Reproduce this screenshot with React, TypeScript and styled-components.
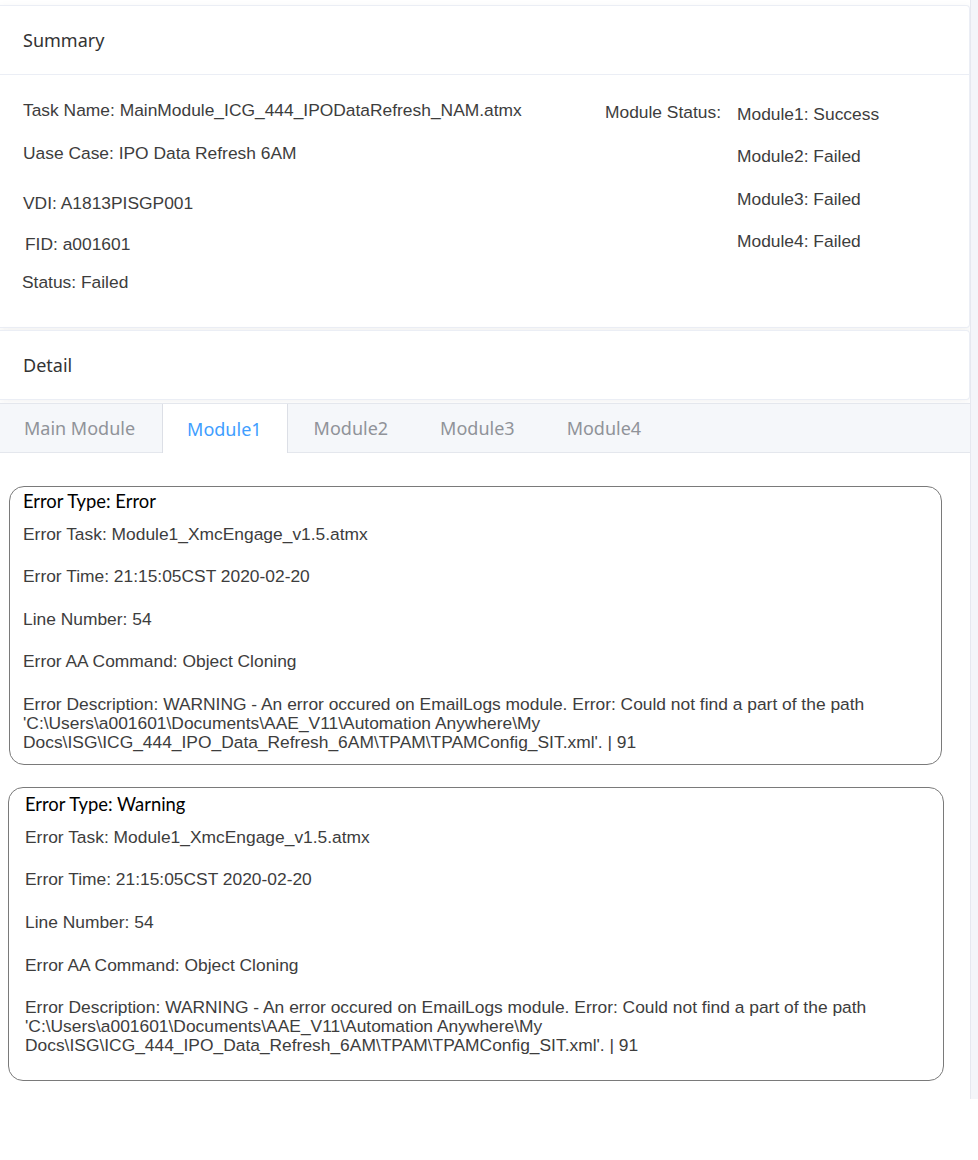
import React from 'react'
import styled, { createGlobalStyle } from 'styled-components'

const GlobalStyle = createGlobalStyle`
  body {
    margin: 0;
    background: #fff;
    font-family: "Liberation Sans", Arial, sans-serif;
    color: #3d3d3d;
  }
`

const summaryLeft = [
  { text: 'Task Name: MainModule_ICG_444_IPODataRefresh_NAM.atmx', top: 0, indent: 0 },
  { text: 'Uase Case: IPO Data Refresh 6AM', top: 23, indent: 0 },
  { text: 'VDI: A1813PISGP001', top: 30, indent: 0 },
  { text: 'FID: a001601', top: 21, indent: 2 },
  { text: 'Status: Failed', top: 18, indent: -1 },
]

const moduleStatus = ['Module1: Success', 'Module2: Failed', 'Module3: Failed', 'Module4: Failed']

const tabs = ['Main Module', 'Module1', 'Module2', 'Module3', 'Module4']

const errors = [
  { type: 'Error', inset: 9, width: 933, padX: 13, padTop: 3, padBottom: 12, top: 33, spacing: 23.4 },
  { type: 'Warning', inset: 8, width: 936, padX: 16, padTop: 5, padBottom: 25, top: 22, spacing: 23.7 },
]

const description =
  "Error Description: WARNING - An error occured on EmailLogs module. Error: Could not find a part of the path 'C:\\Users\\a001601\\Documents\\AAE_V11\\Automation Anywhere\\My Docs\\ISG\\ICG_444_IPO_Data_Refresh_6AM\\TPAM\\TPAMConfig_SIT.xml'. | 91"

export default function App() {
  return (
    <>
      <GlobalStyle />
      <Page>
        <Main>
          <Card>
            <CardHeader $divider>Summary</CardHeader>
            <SummaryBody>
              <LeftColumn>
                {summaryLeft.map((f) => (
                  <Field key={f.text} $top={f.top} $indent={f.indent}>
                    {f.text}
                  </Field>
                ))}
              </LeftColumn>
              <StatusBlock>
                <StatusLabel>Module Status:</StatusLabel>
                <StatusList>
                  {moduleStatus.map((m) => (
                    <StatusItem key={m}>{m}</StatusItem>
                  ))}
                </StatusList>
              </StatusBlock>
            </SummaryBody>
          </Card>

          <DetailCard>
            <CardHeader>Detail</CardHeader>
          </DetailCard>

          <TabBar>
            {tabs.map((t) => (
              <Tab key={t} $active={t === 'Module1'}>
                {t}
              </Tab>
            ))}
          </TabBar>

          <ErrorList>
            {errors.map((e) => (
              <ErrorCard
                key={e.type}
                $inset={e.inset}
                $width={e.width}
                $padX={e.padX}
                $padTop={e.padTop}
                $padBottom={e.padBottom}
                $top={e.top}
              >
                <ErrorTitle>Error Type: {e.type}</ErrorTitle>
                <ErrorLine $spacing={e.spacing}>Error Task: Module1_XmcEngage_v1.5.atmx</ErrorLine>
                <ErrorLine $spacing={e.spacing}>Error Time: 21:15:05CST 2020-02-20</ErrorLine>
                <ErrorLine $spacing={e.spacing}>Line Number: 54</ErrorLine>
                <ErrorLine $spacing={e.spacing}>Error AA Command: Object Cloning</ErrorLine>
                <ErrorLine $spacing={e.spacing}>{description}</ErrorLine>
              </ErrorCard>
            ))}
          </ErrorList>
        </Main>
        <Rail />
      </Page>
    </>
  )
}

const Page = styled.div`
  display: flex;
  align-items: stretch;
  width: 978px;
`

const Main = styled.main`
  width: 970px;
  padding: 5px 0 18px;
  flex-shrink: 0;
`

const Rail = styled.div`
  flex: 1;
  background: #f4f5f9;
  border-left: 1px solid #e6e8ef;
`

const Card = styled.section`
  background: #fff;
  border: 1px solid #ebeef5;
  border-left: none;
  border-radius: 0 4px 4px 0;
  box-shadow: 0 2px 8px rgba(0, 0, 0, 0.05);
`

const DetailCard = styled(Card)`
  margin-top: 2px;
`

const CardHeader = styled.div<{ $divider?: boolean }>`
  height: 68px;
  padding: 0 23px;
  display: flex;
  align-items: center;
  font-family: "Noto Sans", "Liberation Sans", sans-serif;
  font-size: 18px;
  color: #333;
  border-bottom: ${(p) => (p.$divider ? '1px solid #ebeef5' : 'none')};
`

const SummaryBody = styled.div`
  display: flex;
  padding: 25px 0 35px 23px;
`

const LeftColumn = styled.div`
  flex: 1;
  display: flex;
  flex-direction: column;
`

const Field = styled.div<{ $top: number; $indent: number }>`
  font-size: 17.4px;
  line-height: 20px;
  margin-top: ${(p) => p.$top}px;
  margin-left: ${(p) => p.$indent}px;
`

const StatusBlock = styled.div`
  width: 364px;
  display: flex;
`

const StatusLabel = styled.div`
  width: 132px;
  font-size: 17.4px;
  line-height: 20px;
  padding-top: 2px;
`

const StatusList = styled.div`
  display: flex;
  flex-direction: column;
  gap: 22.3px;
  padding-top: 4px;
`

const StatusItem = styled.div`
  font-size: 17.4px;
  line-height: 20px;
`

const TabBar = styled.nav`
  display: flex;
  margin: 3px -8px 0 0;
  height: 48px;
  background: #f5f7fa;
  border-top: 1px solid #e4e7ed;
  border-bottom: 1px solid #e4e7ed;
`

const Tab = styled.div<{ $active?: boolean }>`
  display: flex;
  align-items: center;
  padding: 0 25.5px 0 24.5px;
  margin-bottom: ${(p) => (p.$active ? '-1px' : '0')};
  font-family: "Noto Sans", "Liberation Sans", sans-serif;
  font-size: 18px;
  color: ${(p) => (p.$active ? '#409eff' : '#909399')};
  background: ${(p) => (p.$active ? '#fff' : 'transparent')};
  border-left: 1px solid ${(p) => (p.$active ? '#dcdfe6' : 'transparent')};
  border-right: 1px solid ${(p) => (p.$active ? '#dcdfe6' : 'transparent')};

  &:first-child {
    margin-left: -1.5px;
  }
`

const ErrorList = styled.div`
  display: flex;
  flex-direction: column;
`

const ErrorCard = styled.article<{
  $inset: number
  $width: number
  $padX: number
  $padTop: number
  $padBottom: number
  $top: number
}>`
  margin: ${(p) => p.$top}px 0 0 ${(p) => p.$inset}px;
  width: ${(p) => p.$width}px;
  box-sizing: border-box;
  padding: ${(p) => p.$padTop}px ${(p) => p.$padX}px ${(p) => p.$padBottom}px;
  border: 1px solid #7a7a7a;
  border-radius: 15px;
  color: #3d3d3d;
`

const ErrorTitle = styled.h4`
  margin: 0 0 13px;
  font-family: "Lato", "Noto Sans", sans-serif;
  font-weight: 400;
  font-size: 18.4px;
  line-height: 22px;
  color: #000;
`

const ErrorLine = styled.p<{ $spacing: number }>`
  margin: 0 0 ${(p) => p.$spacing}px;
  font-size: 17.4px;
  line-height: 19px;

  &:last-child {
    margin-bottom: 0;
  }
`
